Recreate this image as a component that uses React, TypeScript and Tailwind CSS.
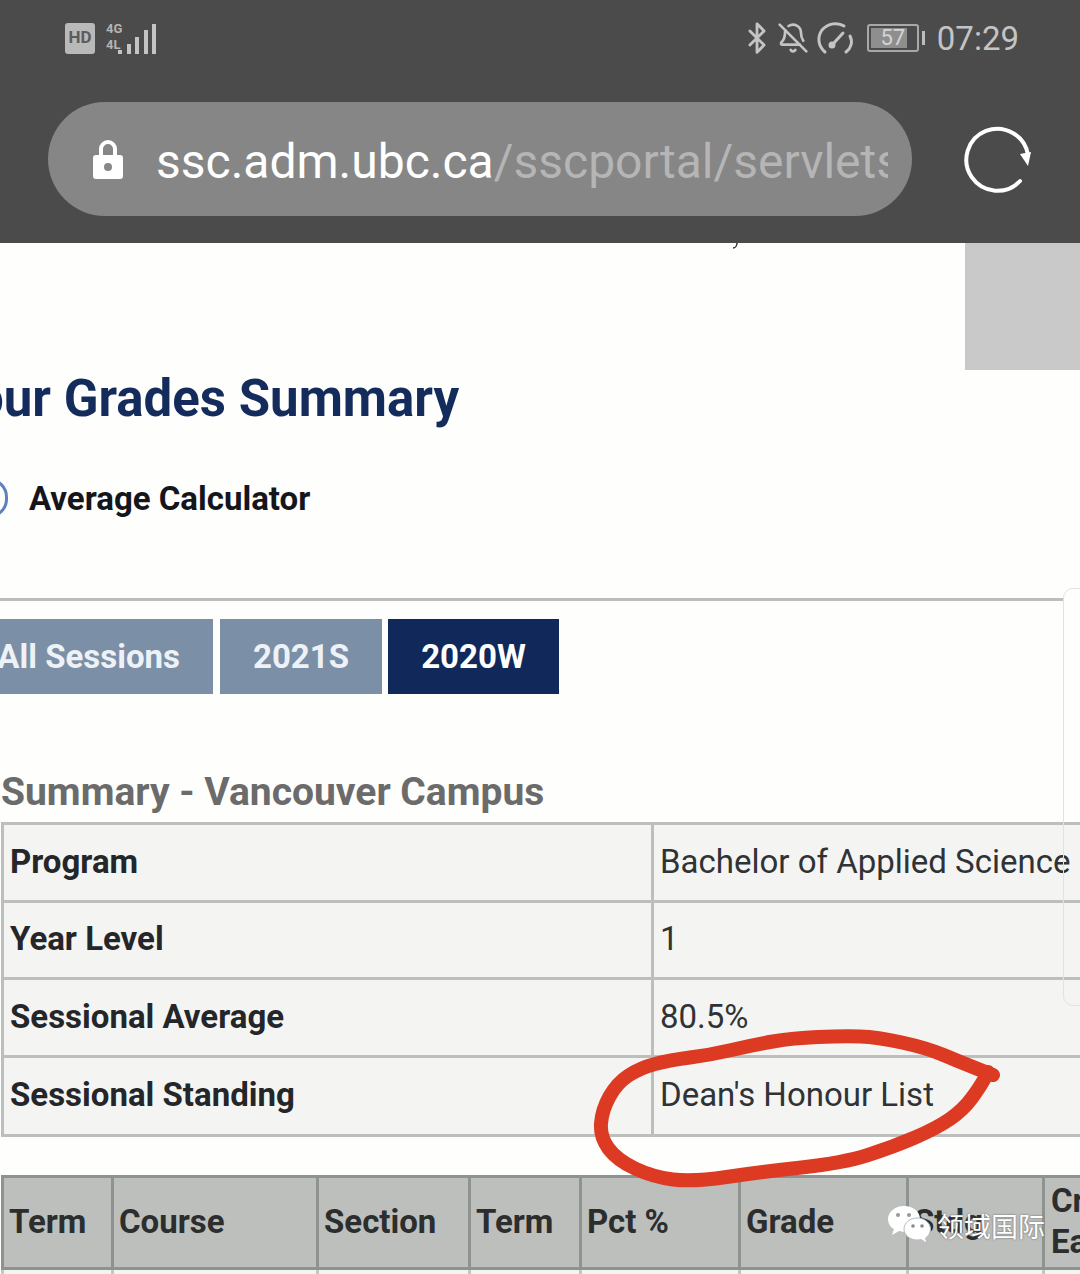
import { Bluetooth, BellOff } from "lucide-react";

const summaryRows = [
  { label: "Program", value: "Bachelor of Applied Science", h: "h-[75px]" },
  { label: "Year Level", value: "1", h: "h-[77px]" },
  { label: "Sessional Average", value: "80.5%", h: "h-[78px]" },
  { label: "Sessional Standing", value: "Dean's Honour List", h: "h-[79px]" },
];

const gradeCols = [
  { label: "Term", w: "w-[110px]" },
  { label: "Course", w: "w-[205px]" },
  { label: "Section", w: "w-[152px]" },
  { label: "Term", w: "w-[111px]" },
  { label: "Pct %", w: "w-[159px]" },
  { label: "Grade", w: "w-[168px]" },
  { label: "Stdg", w: "w-[136px]" },
];

// centre line of the hand drawn red ring
const ring = [
  [993, 1075], [960, 1062], [927, 1048], [877, 1037], [843, 1036], [793, 1038], [753, 1045], [710, 1055],
  [670, 1060], [640, 1068], [617, 1083], [602, 1110], [600, 1137], [617, 1160], [653, 1177], [693, 1182],
  [760, 1172], [843, 1163], [893, 1147], [937, 1128], [963, 1110], [980, 1087], [988, 1072],
];

function ringPath() {
  let d = `M${ring[0][0]} ${ring[0][1]}`;
  for (let i = 1; i < ring.length - 1; i++) {
    const mx = (ring[i][0] + ring[i + 1][0]) / 2;
    const my = (ring[i][1] + ring[i + 1][1]) / 2;
    d += `Q${ring[i][0]} ${ring[i][1]} ${mx} ${my}`;
  }
  const last = ring[ring.length - 1];
  return d + `L${last[0]} ${last[1]}`;
}

function SignalIcon() {
  return (
    <svg width="38" height="31" viewBox="0 0 38 31" fill="#c4c4c4">
      <rect x="0" y="27" width="4" height="4" />
      <rect x="9" y="21" width="4" height="10" />
      <rect x="17" y="14" width="4" height="17" />
      <rect x="26" y="7" width="4" height="24" />
      <rect x="34" y="1" width="4" height="30" />
    </svg>
  );
}

function GaugeIcon() {
  return (
    <svg width="38" height="34" viewBox="0 0 38 34" fill="none" stroke="#c4c4c4" strokeWidth="3" strokeLinecap="round">
      <path d="M9 31C2 25 1 16 6 9C12 2 22 1 28 5" />
      <path d="M34 15C37 21 35 27 30 31" />
      <path d="M17 23L27 12" />
      <circle cx="16" cy="24" r="2" fill="#c4c4c4" />
    </svg>
  );
}

function LockIcon() {
  return (
    <svg width="30" height="40" viewBox="0 0 30 40">
      <path d="M8 18V10a7 7 0 0 1 14 0v8" fill="none" stroke="#fff" strokeWidth="4" />
      <rect x="0" y="16" width="30" height="24" rx="3" fill="#fff" />
      <circle cx="15" cy="28" r="4" fill="#888" />
    </svg>
  );
}

function ReloadIcon() {
  return (
    <svg width="68" height="68" viewBox="0 0 68 68" fill="none">
      <path d="M57 56A31 31 0 1 1 65 30" stroke="#fff" strokeWidth="4" strokeLinecap="round" />
      <path d="M57 29L68 27L65 41Z" fill="#fff" />
    </svg>
  );
}

function WechatIcon() {
  return (
    <svg width="44" height="40" viewBox="0 0 44 40">
      <path d="M17 1C8 1 1 7 1 14c0 4 2 8 6 10l-2 6 7-4c2 .5 3 .7 5 .7 9 0 16-6 16-13S26 1 17 1z" fill="#fff" />
      <path d="M30 13c-7 0-13 5-13 11s6 11 13 11c1 0 3 0 4-.5l6 4-1.500-5.500c3-2 5-5 5-9 0-6-6-11-13-11z" fill="#fff" stroke="#b9b9b9" strokeWidth="1" />
      <circle cx="11" cy="10" r="2" fill="#999" />
      <circle cx="22" cy="10" r="2" fill="#999" />
      <circle cx="26" cy="21" r="1.800" fill="#888" />
      <circle cx="35" cy="21" r="1.800" fill="#888" />
    </svg>
  );
}

export default function App() {
  return (
    <div className="relative w-[1080px] h-[1274px] overflow-hidden bg-[#fefefc] font-['Roboto',sans-serif]">
      {/* Phone chrome */}
      <div className="h-[243px] bg-[#4b4b4b] px-[48px] pt-[19px]">
        <div className="flex h-[38px] items-center justify-between pl-[17px] pr-[13px]">
          <div className="flex items-center gap-[10px]">
            <div className="flex h-[31px] w-[30px] items-center justify-center rounded-[3px] bg-[#b9b9b9] text-[17px] font-bold text-[#5c5c5c]">HD</div>
            <div className="relative h-[31px] w-[52px]">
              <span className="absolute left-[1px] top-[-1px] text-[13px] font-bold leading-[14px] text-[#b4b4b4]">4G</span>
              <span className="absolute left-[1px] top-[15px] text-[13px] font-bold leading-[14px] text-[#b4b4b4]">4L</span>
              <div className="absolute bottom-0 right-[1px]"><SignalIcon /></div>
            </div>
          </div>
          <div className="flex items-center text-[#c4c4c4]">
            <Bluetooth size={34} strokeWidth={2} className="mr-[3px]" />
            <BellOff size={32} strokeWidth={2} className="mr-[7px]" />
            <GaugeIcon />
            <div className="ml-[13px] flex h-[28px] w-[52px] items-center rounded-[3px] border-2 border-[#a8a8a8] p-[2px]">
              <div className="flex h-full w-[36px] items-center justify-center bg-[#8e8e8e] pl-[8px] text-[22px] leading-none text-[#d4d4d4]">57</div>
            </div>
            <div className="ml-[3px] h-[14px] w-[3px] bg-[#bdbdbd]" />
            <span className="ml-[12px] text-[33px] leading-none">07:29</span>
          </div>
        </div>
        <div className="mt-[45px] flex items-center">
          <div className="flex h-[114px] w-[864px] items-center rounded-[57px] bg-[#868686] pl-[45px] pr-[24px]">
            <LockIcon />
            <div className="ml-[33px] flex-1 overflow-hidden whitespace-nowrap pt-[5px] text-[48px] leading-[56px]">
              <span className="text-white">ssc.adm.ubc.ca</span>
              <span className="text-[#b5b5b5]">/sscportal/servlets</span>
            </div>
          </div>
          <div className="ml-[51px]"><ReloadIcon /></div>
        </div>
      </div>

      {/* Page */}
      <div className="flex h-[127px] justify-end">
        <div className="h-full w-[115px] bg-[#c9c9c9]" />
      </div>
      <h1 className="ml-[-55px] mt-[-1px] whitespace-nowrap text-[51px] font-bold leading-[60px] text-[#142c5c]">Your Grades Summary</h1>
      <div className="mt-[47px] flex h-[44px] items-center">
        <div className="ml-[-30px] h-[40px] w-[38px] rounded-full border-[3px] border-[#5f80c0]" />
        <span className="ml-[21px] text-[33px] font-bold leading-none text-[#14161c]">Average Calculator</span>
      </div>
      <div className="mt-[78px] h-[3px] w-[1064px] bg-[#bcbebc]" />
      <div className="mt-[18px] flex h-[75px] gap-[6px] text-[33px] font-bold leading-none text-[#eef2f6]">
        <div className="ml-[-30px] flex w-[243px] items-center justify-end bg-[#7b90a6] pr-[33px]">All Sessions</div>
        <div className="ml-[1px] flex w-[162px] items-center justify-center bg-[#7b90a6]">2021S</div>
        <div className="flex w-[171px] items-center justify-center bg-[#10285a] text-white">2020W</div>
      </div>
      <h2 className="ml-[1px] mt-[74px] text-[39px] font-bold leading-[48px] text-[#6b6b6b]">Summary - Vancouver Campus</h2>

      <div className="ml-[1px] mt-[6px] border-y-[3px] border-l-[3px] border-[#bcbfbc] bg-[#f4f5f3]">
        {summaryRows.map((row, i) => (
          <div key={row.label} className={`flex ${row.h} ${i > 0 ? "border-t-[3px] border-[#bcbfbc]" : ""}`}>
            <div className="flex w-[650px] items-center border-r-[3px] border-[#bcbfbc] pb-[2px] pl-[6px] text-[33px] font-bold text-[#24262a]">{row.label}</div>
            <div className="flex flex-1 items-center whitespace-nowrap pb-[2px] pl-[6px] text-[33px] text-[#303336]">{row.value}</div>
          </div>
        ))}
      </div>

      <div className="ml-[1px] mt-[38px] flex h-[95px] border-y-[3px] border-l-[3px] border-[#8f938f] bg-[#bdbfbd] text-[33px] font-bold text-[#2c2e2e]">
        {gradeCols.map((col) => (
          <div key={col.label + col.w} className={`flex ${col.w} shrink-0 items-center border-r-[3px] border-[#8f938f] pb-[2px] pl-[5px]`}>{col.label}</div>
        ))}
        <div className="whitespace-nowrap pl-[6px] pt-[2px] leading-[41px]">Credits<br />Earned</div>
      </div>
      <div className="ml-[1px] flex h-[10px] border-l-[3px] border-[#c4c7c4] bg-[#f3f5f2]">
        {gradeCols.map((col) => (
          <div key={col.label + col.w} className={`${col.w} shrink-0 border-r-[3px] border-[#c4c7c4]`} />
        ))}
      </div>

      {/* Overlays */}
      <svg className="absolute left-[730px] top-[243px]" width="10" height="6" viewBox="0 0 10 6" fill="none">
        <path d="M7 0C7 3 5 5 3 5" stroke="#333" strokeWidth="1.500" />
      </svg>
      <div className="absolute left-[1063px] top-[588px] h-[418px] w-[40px] rounded-[10px] border border-[#e2e2e0]" />
      <svg className="absolute left-0 top-0" width="1080" height="1274" viewBox="0 0 1080 1274" fill="none">
        <path d={ringPath()} stroke="#dc3a22" strokeWidth="14" strokeLinecap="round" strokeLinejoin="round" />
      </svg>
      <div className="absolute left-[887px] top-[1205px] flex items-center">
        <WechatIcon />
        <span className="ml-[6px] font-['Noto_Sans_CJK_SC',sans-serif] text-[27px] leading-none text-white [text-shadow:0_0_2px_#555]">领域国际</span>
      </div>
    </div>
  );
}
